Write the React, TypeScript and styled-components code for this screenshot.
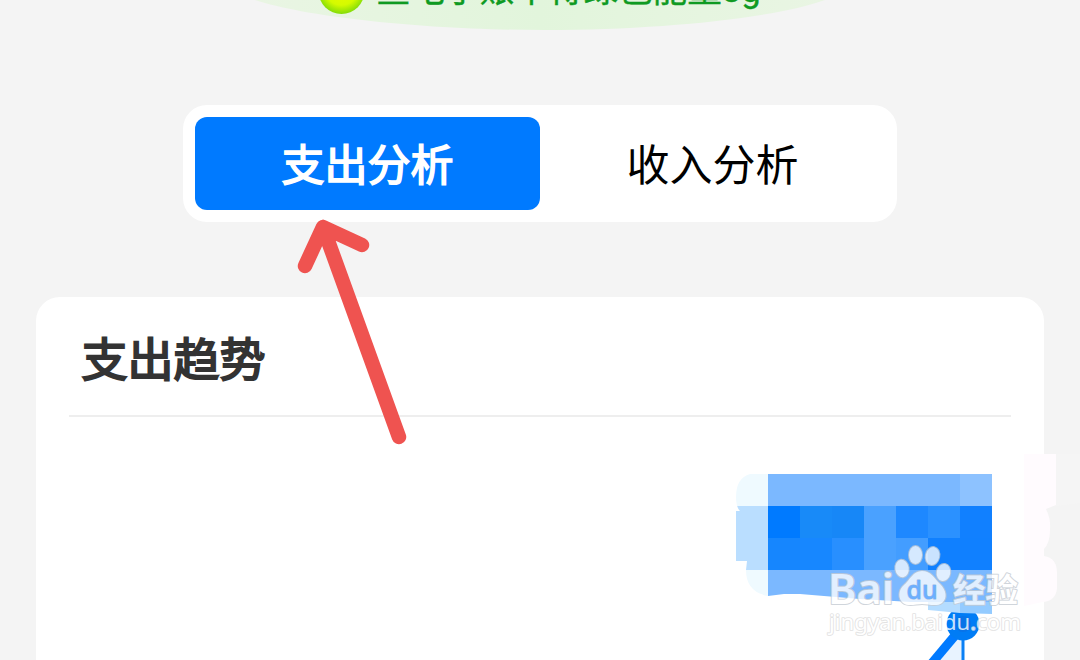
import React from 'react';
import styled, { createGlobalStyle } from 'styled-components';

const GlobalStyle = createGlobalStyle`
  body {
    margin: 0;
    overflow: hidden;
    background: #f4f4f4;
    font-family: "Noto Sans CJK SC", "Noto Sans", sans-serif;
  }
`;

const Page = styled.main`
  position: relative;
  width: 1080px;
  height: 660px;
  overflow: hidden;
  display: flex;
  flex-direction: column;
  align-items: center;
  background: #f4f4f4;
`;

const Banner = styled.header`
  position: relative;
  flex: none;
  width: 100%;
  height: 31px;
  margin-bottom: 74px;
  overflow: hidden;
`;

const BannerArt = styled.svg`
  display: block;
  width: 1080px;
  height: 31px;
`;

const BannerText = styled.span`
  position: absolute;
  left: 376px;
  bottom: 21px;
  font-family: Roboto, "Noto Sans CJK SC", sans-serif;
  font-size: 34.6px;
  font-weight: 400;
  -webkit-text-stroke: 0.4px #0f9a22;
  line-height: 40px;
  white-space: nowrap;
  color: #0f9a22;
`;

const Tabs = styled.nav`
  flex: none;
  display: flex;
  box-sizing: border-box;
  width: 714px;
  height: 117px;
  padding: 12px;
  margin-bottom: 75px;
  border-radius: 24px;
  background: #fff;
`;

const Tab = styled.button<{ $active?: boolean }>`
  flex: 1;
  border: 0;
  padding: 0 0 3px;
  border-radius: 12px;
  font-family: inherit;
  font-size: 43px;
  line-height: 90px;
  font-weight: 400;
  -webkit-text-stroke: ${({ $active }) => ($active ? '1.6px #fff' : '0')};
  color: ${({ $active }) => ($active ? '#fff' : '#000')};
  background: ${({ $active }) => ($active ? '#007aff' : 'transparent')};
`;

const Card = styled.section`
  flex: none;
  box-sizing: border-box;
  width: 1008px;
  height: 420px;
  padding: 0 33px;
  border-radius: 24px;
  background: #fff;
`;

const CardTitle = styled.h2`
  margin: 0;
  padding-left: 12.5px;
  height: 118px;
  border-bottom: 2px solid #eeeeee;
  font-size: 46px;
  line-height: 118px;
  font-weight: 400;
  -webkit-text-stroke: 2px #333;
  color: #333;
`;

const Overlay = styled.svg`
  position: absolute;
  inset: 0;
  pointer-events: none;
`;

/* Mosaic tiles: column, row, columns spanned, fill */
const TILES: [number, number, number, string][] = [
  [0, 0, 1, '#effaff'],
  [1, 0, 6, '#7bb8ff'],
  [7, 0, 1, '#8dc2ff'],
  [0, 1, 1, '#badeff'],
  [1, 1, 1, '#007aff'],
  [2, 1, 1, '#188af8'],
  [3, 1, 1, '#1787f7'],
  [4, 1, 1, '#4aa1ff'],
  [5, 1, 1, '#1e88ff'],
  [6, 1, 1, '#2b91ff'],
  [7, 1, 1, '#1180ff'],
  [0, 2, 1, '#badeff'],
  [1, 2, 1, '#1686fe'],
  [2, 2, 1, '#1787ff'],
  [3, 2, 1, '#288fff'],
  [4, 2, 1, '#4aa1ff'],
  [5, 2, 1, '#439dff'],
  [6, 2, 2, '#1080ff'],
  [0, 3, 1, '#effaff'],
  [1, 3, 5, '#7bb8ff'],
  [6, 3, 2, '#7ab8ff'],
  [6, 4, 1, '#b4dcff'],
  [7, 4, 1, '#94cbff'],
];

const ChartMosaic = () => (
  <g>
    <path d="M963 626V660H934Z" fill="#e8f3ff" />
    <path d="M963 626L932 663" stroke="#007aff" strokeWidth="9" />
    <path d="M963 626V660" stroke="#0a80f5" strokeWidth="3" />
    <circle cx="963" cy="624" r="16.5" fill="#007cf5" />
    <circle cx="963" cy="624" r="8" fill="#0873e8" />
    <clipPath id="smear">
      <path d="M750 474H992V614L960 613L928 610V603L860 599L800 594L784 594L768 596Q746 592 746 570L747 561H736V511H740Q736 507 736 497Q736 478 750 474Z" />
    </clipPath>
    <g clipPath="url(#smear)" shapeRendering="crispEdges">
      {TILES.map(([col, row, span, fill]) => (
        <rect key={`${col}-${row}`} x={736 + col * 32} y={474 + row * 32} width={span * 32} height={32} fill={fill} />
      ))}
    </g>
  </g>
);

const EdgeSmudge = () => (
  <g>
    <path d="M1024 454H1056V505L1046 509Q1051 519 1050 530Q1050 543 1044 549V556Q1057 558 1057 573V588Q1056 601 1043 602L1024 606Z" fill="#fffbfe" />
    <path d="M1056 454H1080V503L1056 506Z" fill="#f5f5f5" />
  </g>
);

const Arrow = () => (
  <path
    d="M305 266L323 227L362 245M323 227L399 437"
    fill="none"
    stroke="#ef5350"
    strokeWidth="14.5"
    strokeLinecap="round"
    strokeLinejoin="round"
  />
);

const Watermark = () => (
  <g
    opacity="0.78"
    fill="#fff"
    stroke="#c4cad2"
    strokeWidth="2"
    strokeLinejoin="round"
    paintOrder="stroke"
    fontFamily='"Noto Sans", "Noto Sans CJK SC", sans-serif'
  >
    <text x="828" y="603.5" fontSize="41" fontWeight="600" textLength="66" lengthAdjust="spacingAndGlyphs">Bai</text>
    <ellipse cx="902" cy="568.5" rx="6.7" ry="8.8" transform="rotate(-8 902 568.5)" />
    <ellipse cx="915.5" cy="555" rx="6.5" ry="9" />
    <ellipse cx="932.5" cy="556" rx="6.8" ry="9" transform="rotate(12 932.5 556)" />
    <ellipse cx="943.5" cy="572.5" rx="6.8" ry="8.6" transform="rotate(10 943.5 572.5)" />
    <path d="M922 571C913 571 910 580 904 585C898 590 898 599 903 603C908 607 916 604 922 604C928 604 937 607 942 603C948 598 946 590 940 584C934 578 931 571 922 571Z" />
    <text x="906.5" y="598.5" fontSize="25" fontWeight="500" fill="#68adff" stroke="#9fb9da" strokeWidth="1" textLength="31" lengthAdjust="spacingAndGlyphs">du</text>
    <text x="953" y="602" fontSize="33" fontWeight="700" fontFamily='"Noto Sans CJK SC", sans-serif' textLength="65" lengthAdjust="spacingAndGlyphs">经验</text>
    <text x="829" y="630" fontSize="22" stroke="#dadada" strokeWidth="1.7" textLength="192" lengthAdjust="spacingAndGlyphs">jingyan.bai<tspan stroke="none">du</tspan>.com</text>
  </g>
);

export default function App() {
  return (
    <>
      <GlobalStyle />
      <Page>
        <Banner>
          <BannerArt viewBox="0 0 1080 31">
            <defs>
              <linearGradient id="leaf" x1="0" x2="1" y1="0" y2="0">
                <stop offset="0" stopColor="#e9f5e3" />
                <stop offset="0.5" stopColor="#e2f5dc" />
                <stop offset="1" stopColor="#e9f5e3" />
              </linearGradient>
              <radialGradient id="orb" cx="0.5" cy="0.45" r="0.55">
                <stop offset="0" stopColor="#f0fa00" />
                <stop offset="0.65" stopColor="#d4fb00" />
                <stop offset="1" stopColor="#82dc08" />
              </radialGradient>
            </defs>
            <path d="M255 0C310 18 430 30 545 30C660 30 775 18 825 0Z" fill="url(#leaf)" />
            <circle cx="341.5" cy="-9" r="23" fill="url(#orb)" />
          </BannerArt>
          <BannerText>查电子账单得绿色能量8g</BannerText>
        </Banner>
        <Tabs>
          <Tab $active>支出分析</Tab>
          <Tab>收入分析</Tab>
        </Tabs>
        <Card>
          <CardTitle>支出趋势</CardTitle>
        </Card>
        <Overlay width="1080" height="660" viewBox="0 0 1080 660">
          <ChartMosaic />
          <EdgeSmudge />
          <Arrow />
          <Watermark />
        </Overlay>
      </Page>
    </>
  );
}
